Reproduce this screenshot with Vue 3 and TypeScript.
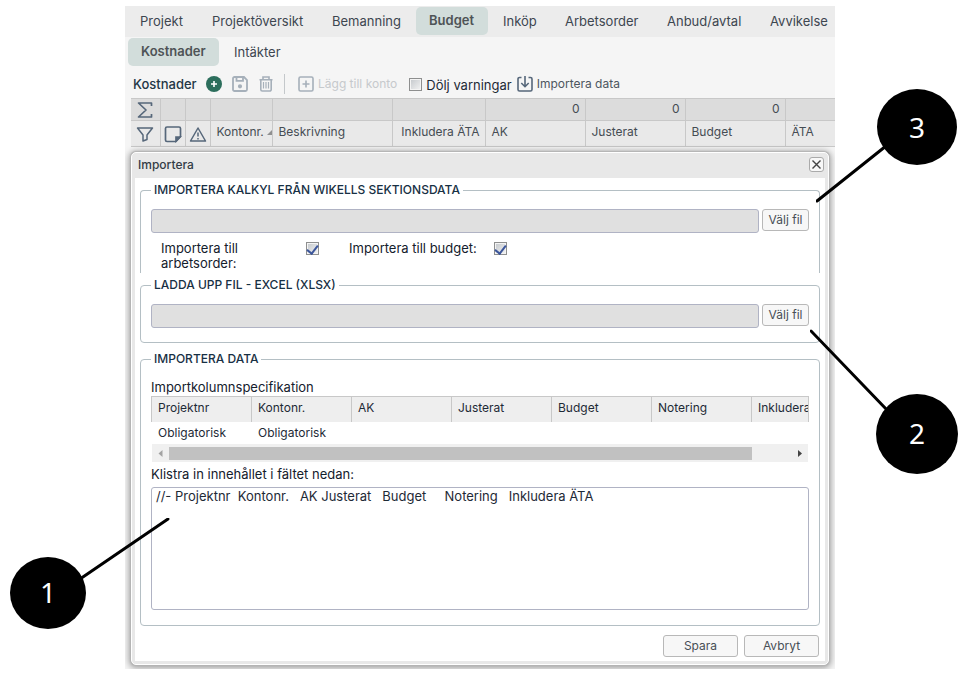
<script setup lang="ts">
import { ref } from 'vue'

interface Tab { label: string; active?: boolean }

const mainTabs: Tab[] = [
  { label: 'Projekt' },
  { label: 'Projektöversikt' },
  { label: 'Bemanning' },
  { label: 'Budget', active: true },
  { label: 'Inköp' },
  { label: 'Arbetsorder' },
  { label: 'Anbud/avtal' },
  { label: 'Avvikelse' },
]
const subTabs: Tab[] = [{ label: 'Kostnader', active: true }, { label: 'Intäkter' }]

const specColumns = ['Projektnr', 'Kontonr.', 'AK', 'Justerat', 'Budget', 'Notering', 'Inkludera ÄTA']
const specRequired = ['Obligatorisk', 'Obligatorisk', '', '', '', '', '']

const hideWarnings = ref(false)
const toWorkOrder = ref(true)
const toBudget = ref(true)
const wikellsFile = ref('')
const excelFile = ref('')
const pasted = ref('//- Projektnr  Kontonr.   AK Justerat   Budget     Notering   Inkludera ÄTA')
</script>

<template>
  <div class="page">
    <main class="app">
      <nav class="tabs main-tabs">
        <a v-for="t in mainTabs" :key="t.label" href="#" class="tab" :class="{ active: t.active }">{{ t.label }}</a>
      </nav>
      <nav class="tabs sub-tabs">
        <a v-for="t in subTabs" :key="t.label" href="#" class="tab" :class="{ active: t.active }">{{ t.label }}</a>
      </nav>

      <div class="toolbar">
        <h1>Kostnader</h1>
        <button type="button" class="tool" aria-label="Lägg till">
          <svg width="16" height="16" viewBox="0 0 16 16"><circle cx="8" cy="8" r="8" fill="#2c6e5c" /><path d="M8 5v6M5 8h6" stroke="#fff" stroke-width="1.6" /></svg>
        </button>
        <button type="button" class="tool" aria-label="Spara">
          <svg width="16" height="16" viewBox="0 0 16 16" fill="none" stroke="#a6b0ba" stroke-width="1.8"><path d="M1 2.5A1.5 1.5 0 0 1 2.5 1H12l3 3v9.5a1.5 1.5 0 0 1-1.5 1.5h-11A1.5 1.5 0 0 1 1 13.500z" /><path d="M4.500 1v3.800h6.500V1" /><circle cx="8" cy="10.300" r="1.200" fill="#a6b0ba" /></svg>
        </button>
        <button type="button" class="tool" aria-label="Ta bort">
          <svg width="16" height="16" viewBox="0 0 16 16" fill="none" stroke="#a6b0ba" stroke-width="1.6"><path d="M1.500 3.700h13M5 3.500V1h6v2.500M2.800 4v9.500A1.500 1.500 0 0 0 4.300 15h7.400a1.500 1.500 0 0 0 1.500-1.500V4" /><path d="M5.500 6v6.500M8 6v6.500M10.500 6v6.500" stroke-width="1.200" /></svg>
        </button>
        <span class="divider"></span>
        <button type="button" class="tool text-tool muted" disabled>
          <svg width="16" height="16" viewBox="0 0 16 16" fill="none" stroke="#a6b0ba" stroke-width="1.6"><rect x="1" y="1" width="14" height="14" rx="1.500" /><path d="M8 4.500v7M4.500 8h7" /></svg>
          Lägg till konto
        </button>
        <label class="check-label"><input v-model="hideWarnings" type="checkbox" class="check" /><span>Dölj varningar</span></label>
        <button type="button" class="tool text-tool">
          <svg width="16" height="16" viewBox="0 0 16 16" fill="none" stroke="#56677a" stroke-width="1.6"><path d="M4.500 1.500H2.500A1.500 1.500 0 0 0 1 3v10.500A1.500 1.500 0 0 0 2.500 15h11a1.500 1.500 0 0 0 1.500-1.500V3a1.500 1.500 0 0 0-1.500-1.500h-2" /><path d="M8 0v10.500M4.300 7L8 10.700 11.700 7" /></svg>
          Importera data
        </button>
      </div>

      <table class="grid">
        <colgroup>
          <col class="c-first" /><col class="c-icon" /><col class="c-icon" /><col class="c-account" /><col class="c-desc" />
          <col class="c-ata" /><col class="c-num" /><col class="c-num" /><col class="c-num" /><col />
        </colgroup>
        <tbody>
          <tr class="sums">
            <td class="icon">
              <svg width="16" height="16" viewBox="0 0 16 16" fill="none" stroke="#56677a" stroke-width="1.700"><path d="M14.500 4V1H1.500l7.500 7-7.500 7h13v-3" stroke-linejoin="round" /></svg>
            </td>
            <td></td><td></td><td></td><td></td><td></td>
            <td>0</td><td>0</td><td>0</td><td></td>
          </tr>
          <tr class="heads">
            <th class="icon"><svg width="18" height="18" viewBox="0 0 18 18" fill="none" stroke="#56677a" stroke-width="1.500"><path d="M1.500 3h15l-5.500 7v4.500L7 16V10z" stroke-linejoin="round" /></svg></th>
            <th class="icon"><svg width="18" height="18" viewBox="0 0 18 18" fill="none" stroke="#56677a" stroke-width="1.700"><path d="M3 2h12a1.500 1.500 0 0 1 1.500 1.500V11.500L12 16.500H3A1.500 1.500 0 0 1 1.500 15V3.500A1.500 1.500 0 0 1 3 2z" /><path d="M12 16v-4h4z" fill="#56677a" /></svg></th>
            <th class="icon"><svg width="18" height="18" viewBox="0 0 18 18" fill="none" stroke="#56677a" stroke-width="1.500"><path d="M9 3L16.500 16h-15z" stroke-linejoin="round" /><path d="M9 7.500v4M9 13v1.500" /></svg></th>
            <th><span class="sorted">Kontonr.<svg width="5" height="5" viewBox="0 0 5 5"><path d="M5 0v5H0z" fill="#909090" /></svg></span></th>
            <th>Beskrivning</th>
            <th class="right">Inkludera ÄTA</th>
            <th>AK</th><th>Justerat</th><th>Budget</th><th>ÄTA</th>
          </tr>
        </tbody>
      </table>

      <section class="dialog" role="dialog" aria-labelledby="dialog-title">
        <header>
          <h2 id="dialog-title">Importera</h2>
          <button type="button" class="close" aria-label="Stäng">
            <svg width="9" height="9" viewBox="0 0 9 9"><path d="M.5.5l8 8M8.500.5l-8 8" stroke="#444" stroke-width="1.400" /></svg>
          </button>
        </header>
        <div class="body">
          <fieldset class="open">
            <legend>IMPORTERA KALKYL FRÅN WIKELLS SEKTIONSDATA</legend>
            <div class="file-row">
              <input v-model="wikellsFile" type="text" readonly aria-label="Kalkylfil" />
              <button type="button" class="btn pick">Välj fil</button>
            </div>
            <div class="options">
              <label for="to-order">Importera till arbetsorder:</label>
              <input id="to-order" v-model="toWorkOrder" type="checkbox" class="check" />
              <label for="to-budget">Importera till budget:</label>
              <input id="to-budget" v-model="toBudget" type="checkbox" class="check" />
            </div>
          </fieldset>

          <fieldset class="upload">
            <legend>LADDA UPP FIL - EXCEL (XLSX)</legend>
            <div class="file-row">
              <input v-model="excelFile" type="text" readonly aria-label="Excelfil" />
              <button type="button" class="btn pick">Välj fil</button>
            </div>
          </fieldset>

          <fieldset class="data">
            <legend>IMPORTERA DATA</legend>
            <div class="caption">Importkolumnspecifikation</div>
            <table class="spec">
              <thead><tr><th v-for="c in specColumns" :key="c">{{ c }}</th></tr></thead>
              <tbody><tr><td v-for="(r, i) in specRequired" :key="i">{{ r }}</td></tr></tbody>
            </table>
            <div class="scrollbar">
              <svg width="17" height="18" viewBox="0 0 17 18"><path d="M10.500 6v7L6.500 9.500z" fill="#a3a3a3" /></svg>
              <div class="track"><div class="thumb"></div></div>
              <svg width="17" height="18" viewBox="0 0 17 18"><path d="M7 6v7l4-3.500z" fill="#444" /></svg>
            </div>
            <label for="paste" class="paste-label">Klistra in innehållet i fältet nedan:</label>
            <textarea id="paste" v-model="pasted" spellcheck="false"></textarea>
          </fieldset>

          <div class="actions">
            <button type="button" class="btn">Spara</button>
            <button type="button" class="btn">Avbryt</button>
          </div>
        </div>
      </section>
    </main>

    <div class="callout one">
      <svg width="160" height="112" viewBox="0 0 160 112"><ellipse cx="38" cy="75" rx="38" ry="36" /><path d="M70 61L158 1" /></svg>
      <span>1</span>
    </div>
    <div class="callout two">
      <svg width="148" height="146" viewBox="0 0 148 146"><ellipse cx="107" cy="106" rx="41" ry="40" /><path d="M78 83L1 3" /></svg>
      <span>2</span>
    </div>
    <div class="callout three">
      <svg width="142" height="116" viewBox="0 0 142 116"><ellipse cx="101" cy="38" rx="40" ry="38" /><path d="M70 57L1 112" /></svg>
      <span>3</span>
    </div>
  </div>
</template>

<style>
body { background: #fff; }
</style>

<style scoped>
* { box-sizing: border-box; }
.page {
  position: relative;
  padding: 6px 136px 6px 125px;
  font: 13px/16px Inter, "Open Sans", sans-serif;
  color: #1e2a36;
}
h1, h2, fieldset, legend { margin: 0; padding: 0; }
button, input, textarea { font: inherit; color: inherit; margin: 0; }
.app { background: #f5f5f5; overflow: hidden; padding-bottom: 4px; }

.tabs { display: grid; gap: 2px; white-space: nowrap; }
.main-tabs {
  grid-template-columns: 70px 118px 95px 72px 60px 100px 101px 1fr;
  height: 31px;
  padding: 1px 0 2px 2px;
  background: #ececec;
}
.sub-tabs { grid-template-columns: 91px 1fr; height: 31px; padding: 1px 0 2px 3px; }
.tab { padding: 6px 0 0 13px; color: #3d4650; text-decoration: none; border-radius: 5px; }
.tab.active { padding-top: 5px; background: #d2dddb; color: #4e5356; font-weight: 600; }

.toolbar { display: flex; align-items: center; height: 30px; padding-left: 8px; margin: 1px 0 -1px; white-space: nowrap; }
h1 { width: 73px; font-size: 13px; font-weight: 500; color: #233746; }
.tool { display: flex; align-items: center; gap: 4px; padding: 0; border: 0; background: none; margin-right: 10px; }
.tool svg { flex: none; }
.text-tool { font-size: 12px; color: #4d5660; }
.text-tool.muted { color: #c6c9cc; margin-right: 12px; }
.divider { width: 1px; height: 20px; background: #c4c8cb; margin-right: 13px; }
.check-label { display: flex; align-items: center; gap: 4px; margin-right: 5px; }
.check-label span { padding-top: 2px; }

.check {
  appearance: none;
  flex: none;
  width: 13px;
  height: 13px;
  border: 1px solid #8e8f8f;
  background: linear-gradient(135deg, #c3c7cb, #f4f4f4);
  box-shadow: inset 0 0 0 1px #f4f4f4;
}
.check:checked { display: grid; place-items: center; }
.check:checked::after {
  content: "";
  width: 5px;
  height: 9px;
  margin-bottom: 2px;
  border: solid #3c569b;
  border-width: 0 2px 2px 0;
  transform: rotate(38deg);
}

.grid { width: calc(100% - 6px); margin-left: 6px; border-collapse: collapse; table-layout: fixed; font-size: 12px; color: #454c53; }
.c-first { width: 29px; }
.c-icon { width: 25px; }
.c-account { width: 62px; }
.c-desc { width: 120px; }
.c-ata { width: 93px; }
.c-num { width: 100px; }
.grid td, .grid th { padding: 0 5px 2px 6px; border: 1px solid #c8c8c8; border-left: 0; text-align: left; font-weight: 400; white-space: nowrap; }
.grid tr > :last-child { border-right: 0; }
.sums td { height: 22px; background: #dcdcdc; text-align: right; }
.heads th { height: 26px; padding-bottom: 3px; background: #e9e9e9; }
.grid .icon { padding: 0; text-align: center; }
.grid .icon svg { display: block; margin: 0 auto; }
.grid .right { padding-left: 0; text-align: right; }
.grid .sums td { text-align: right; }
.sorted { display: flex; align-items: center; justify-content: space-between; margin-right: -5px; }

.dialog {
  margin: 5px 6px 0;
  padding: 0 3px 3px;
  border: 1px solid #fff;
  border-radius: 5px;
  background: #e8e8e8;
  box-shadow: 0 0 1px 1px #b4b4b4, 0 1px 6px 2px rgba(0, 0, 0, 0.35);
}
.dialog header { display: flex; align-items: center; justify-content: space-between; height: 25px; padding: 0 1px 2px 3px; }
h2 { font-size: 12px; font-weight: 500; color: #333c46; }
.close { display: grid; place-items: center; width: 15px; height: 15px; padding: 0; border: 1px solid #aaa; border-radius: 3px; background: #f8f8f8; }
.body { background: #fff; padding: 4px 5px; }

fieldset { min-width: 0; border: 1px solid #b4bfc4; border-radius: 4px; padding: 11px 10px 0; }
legend { height: 16px; padding: 0 3px; font-size: 12px; font-weight: 500; color: #173044; white-space: nowrap; }
.open { border-bottom: 0; border-radius: 4px 4px 0 0; height: 91px; }
.upload { margin-top: 4px; padding-bottom: 14px; }
.data { margin-top: 8px; padding: 12px 10px 15px; }
.file-row { display: flex; align-items: flex-start; gap: 3px; }
.file-row input { flex: 1; min-width: 0; height: 24px; border: 1px solid #b0b3c4; border-radius: 3px; background: #e0e0e0; padding: 0 5px; outline: 0; }
.btn { width: 75px; height: 22px; padding: 0; border: 1px solid #b8b8b8; border-radius: 3px; background: #f7f7f7; font-size: 12px; color: #484f56; }
.btn.pick { width: 47px; }
.options { display: flex; align-items: flex-start; padding: 8px 10px 0; line-height: 15px; }
.options label { width: 145px; padding-right: 15px; }
.options .check { margin: 1px 30px 0 0; }
.options label, .caption, .paste-label { color: #14202c; }
.caption { margin-bottom: 1px; }

.spec { width: 100%; table-layout: fixed; border-collapse: separate; border-spacing: 0; font-size: 12px; }
.spec th, .spec td { width: 100px; padding: 0 0 0 6px; font-weight: 400; text-align: left; white-space: nowrap; overflow: hidden; }
.spec th { height: 26px; padding-bottom: 3px; border: solid #c8c8c8; border-width: 1px 0 0 1px; background: #eee; }
.spec th:last-child { width: auto; border-right-width: 1px; }
.spec td { height: 22px; padding-left: 7px; }
.scrollbar { display: flex; height: 18px; margin: 0 1px; background: #f0f0f0; }
.track { flex: 1; padding: 3px 0 2px; }
.thumb { width: calc(100% - 39px); height: 13px; background: #c1c1c1; }
.paste-label { display: block; margin: 4px 0 5px; }
textarea { display: block; width: 100%; height: 123px; padding: 0 4px; border: 1px solid #b0b3c4; border-radius: 3px; background: #fff; resize: none; outline: 0; white-space: pre; overflow: hidden; }
.actions { display: flex; justify-content: flex-end; gap: 6px; margin-top: 9px; padding-right: 1px; }

.callout { position: absolute; pointer-events: none; }
.callout svg { display: block; stroke: #000; stroke-width: 3; stroke-linecap: round; }
.callout ellipse { stroke: none; }
.callout span { position: absolute; width: 40px; text-align: center; font: 28px/36px "Noto Sans", sans-serif; color: #fff; }
.one { left: 10px; top: 518px; }
.one span { left: 18px; top: 56px; }
.two { right: 13px; top: 328px; }
.two span { left: 87px; top: 87px; }
.three { right: 13px; top: 89px; }
.three span { left: 81px; top: 20px; }
</style>
